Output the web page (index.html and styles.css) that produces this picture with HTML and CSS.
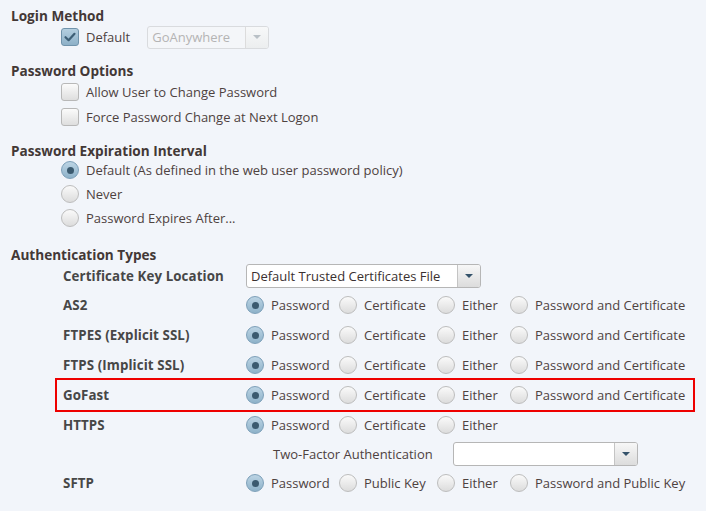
FILE: index.html
```html
<!DOCTYPE html>
<html>
<head>
<meta charset="utf-8">
<link rel="stylesheet" href="styles.css">
</head>
<body>
<div class="page">
  <section class="group g-login">
    <h2 class="group-title">Login Method</h2>
    <div class="opts">
      <div class="opt">
        <span class="cb checked"><svg viewBox="0 0 18 18" width="18" height="18"><path d="M4.5 9.2 L7.6 12.2 L13.5 5.8" fill="none" stroke="#3d5f76" stroke-width="2.2" stroke-linecap="round" stroke-linejoin="round"/></svg></span>
        <span class="opt-text">Default</span>
        <div class="select disabled login-select">
          <span class="select-value">GoAnywhere</span>
          <span class="select-btn"><span class="tri"></span></span>
        </div>
      </div>
    </div>
  </section>

  <section class="group g-pwopts">
    <h2 class="group-title">Password Options</h2>
    <div class="opts">
      <div class="opt"><span class="cb"></span><span class="opt-text">Allow User to Change Password</span></div>
      <div class="opt"><span class="cb"></span><span class="opt-text">Force Password Change at Next Logon</span></div>
    </div>
  </section>

  <section class="group g-expire">
    <h2 class="group-title">Password Expiration Interval</h2>
    <div class="opts">
      <div class="opt"><span class="rb on"></span><span class="opt-text">Default (As defined in the web user password policy)</span></div>
      <div class="opt"><span class="rb"></span><span class="opt-text">Never</span></div>
      <div class="opt"><span class="rb"></span><span class="opt-text">Password Expires After...</span></div>
    </div>
  </section>

  <section class="group g-auth">
    <h2 class="group-title">Authentication Types</h2>
    <div class="auth-row cert-row">
      <span class="auth-label">Certificate Key Location</span>
      <div class="select cert-select">
        <span class="select-value">Default Trusted Certificates File</span>
        <span class="select-btn"><span class="tri"></span></span>
      </div>
    </div>
    <div class="auth-row">
      <span class="auth-label">AS2</span>
      <div class="choices">
        <span class="choice"><span class="rb on"></span>Password</span>
        <span class="choice"><span class="rb"></span>Certificate</span>
        <span class="choice"><span class="rb"></span>Either</span>
        <span class="choice"><span class="rb"></span>Password and Certificate</span>
      </div>
    </div>
    <div class="auth-row">
      <span class="auth-label">FTPES (Explicit SSL)</span>
      <div class="choices">
        <span class="choice"><span class="rb on"></span>Password</span>
        <span class="choice"><span class="rb"></span>Certificate</span>
        <span class="choice"><span class="rb"></span>Either</span>
        <span class="choice"><span class="rb"></span>Password and Certificate</span>
      </div>
    </div>
    <div class="auth-row">
      <span class="auth-label">FTPS (Implicit SSL)</span>
      <div class="choices">
        <span class="choice"><span class="rb on"></span>Password</span>
        <span class="choice"><span class="rb"></span>Certificate</span>
        <span class="choice"><span class="rb"></span>Either</span>
        <span class="choice"><span class="rb"></span>Password and Certificate</span>
      </div>
    </div>
    <div class="auth-row highlight">
      <span class="auth-label">GoFast</span>
      <div class="choices">
        <span class="choice"><span class="rb on"></span>Password</span>
        <span class="choice"><span class="rb"></span>Certificate</span>
        <span class="choice"><span class="rb"></span>Either</span>
        <span class="choice"><span class="rb"></span>Password and Certificate</span>
      </div>
    </div>
    <div class="auth-row">
      <span class="auth-label">HTTPS</span>
      <div class="choices">
        <span class="choice"><span class="rb on"></span>Password</span>
        <span class="choice"><span class="rb"></span>Certificate</span>
        <span class="choice"><span class="rb"></span>Either</span>
      </div>
    </div>
    <div class="auth-row twofactor-row">
      <span class="auth-label"></span>
      <div class="twofactor">
        <span class="tf-label">Two-Factor Authentication</span>
        <div class="select tf-select">
          <span class="select-value"></span>
          <span class="select-btn"><span class="tri"></span></span>
        </div>
      </div>
    </div>
    <div class="auth-row">
      <span class="auth-label">SFTP</span>
      <div class="choices">
        <span class="choice"><span class="rb on"></span>Password</span>
        <span class="choice"><span class="rb"></span>Public Key</span>
        <span class="choice"><span class="rb"></span>Either</span>
        <span class="choice"><span class="rb"></span>Password and Public Key</span>
      </div>
    </div>
  </section>
</div>
</body>
</html>
```

FILE: styles.css
```css
* { box-sizing: border-box; }
html, body {
  margin: 0;
  padding: 0;
  background: #f2f5fa;
}
body {
  font-family: "Open Sans", "Liberation Sans", sans-serif;
  font-size: 13px;
  color: #4e423f;
  width: 706px;
  height: 511px;
  overflow: hidden;
}
.page {
  padding: 7px 0 0 0;
}
.group-title {
  margin: 0 0 0 11px;
  height: 18px;
  line-height: 18px;
  font-size: 13.6px;
  font-weight: 700;
  color: #433836;
}
.opts {
  padding-left: 61px;
  display: flex;
  flex-direction: column;
}
.opt {
  height: 24px;
  display: flex;
  align-items: center;
}
.g-pwopts { margin-top: 13px; }
.g-pwopts .opts { gap: 1px; }
.g-expire { margin-top: 13px; }
.g-expire .opts { margin-top: -2px; }
.g-auth { margin-top: 16px; }

.opt-text { margin-left: 7px; }

/* checkbox */
.cb {
  width: 18px;
  height: 18px;
  flex: none;
  border: 1px solid #b8b8b8;
  border-radius: 3px;
  background: linear-gradient(#fbfbfb, #dedede);
  display: inline-block;
  position: relative;
}
.cb.checked {
  border-color: #7093ab;
  background: linear-gradient(#b4cfe0, #8db0c7);
}
.cb svg {
  position: absolute;
  left: -1px;
  top: -1px;
}

/* radio */
.rb {
  width: 18px;
  height: 18px;
  flex: none;
  border-radius: 50%;
  border: 1px solid #bdbdbd;
  background: linear-gradient(#fafafa, #dcdcdc);
  display: inline-flex;
  align-items: center;
  justify-content: center;
}
.rb.on {
  border-color: #7c9fb8;
  background: linear-gradient(#bcd4e4, #8eb2c9);
}
.rb.on::after {
  content: "";
  width: 7px;
  height: 7px;
  border-radius: 50%;
  background: #3b5a6f;
}

/* select */
.select {
  display: flex;
  align-items: stretch;
  border: 1px solid #b6b6b6;
  border-radius: 3px;
  background: #fff;
  overflow: hidden;
}
.select-value {
  flex: 1;
  padding-left: 4px;
  display: flex;
  align-items: center;
  color: #3a3030;
  white-space: nowrap;
}
.select-btn {
  flex: none;
  width: 23px;
  border-left: 1px solid #c4c4c4;
  background: linear-gradient(#f7f7f7, #dcdcdc);
  display: flex;
  align-items: center;
  justify-content: center;
}
.tri {
  width: 0;
  height: 0;
  border-left: 4px solid transparent;
  border-right: 4px solid transparent;
  border-top: 4px solid #34526a;
}
.select.disabled {
  border-color: #d9dbde;
  background: #f4f6f9;
}
.select.disabled .select-value { color: #b4b4b4; }
.select.disabled .select-btn {
  border-left-color: #dcdcdc;
  background: linear-gradient(#f7f8f9, #eceeef);
}
.select.disabled .tri { border-top-color: #b9c0c6; }
.login-select {
  width: 122px;
  height: 23px;
  margin-left: 17px;
}

/* auth table */
.auth-row {
  margin-left: 57px;
  width: 636px;
  height: 30px;
  padding-left: 6px;
  display: flex;
  align-items: center;
}
.auth-label {
  width: 183px;
  flex: none;
  font-weight: 700;
  font-size: 13.3px;
  letter-spacing: 0.1px;
  color: #474747;
  white-space: nowrap;
}
.cert-row {
  height: 24px;
  margin-bottom: 2px;
}
.cert-select {
  width: 235px;
  height: 24px;
}
.highlight {
  outline: 2px solid #ee0000;
}
.choices {
  display: grid;
  grid-template-columns: 93px 98px 73px auto;
  align-items: center;
}
.choice {
  display: flex;
  align-items: center;
  gap: 7px;
  white-space: nowrap;
}
.twofactor-row { height: 28px; }
.twofactor {
  display: flex;
  align-items: center;
  padding-left: 27px;
}
.tf-label { width: 180px; flex: none; }
.tf-select {
  width: 185px;
  height: 24px;
}
```
